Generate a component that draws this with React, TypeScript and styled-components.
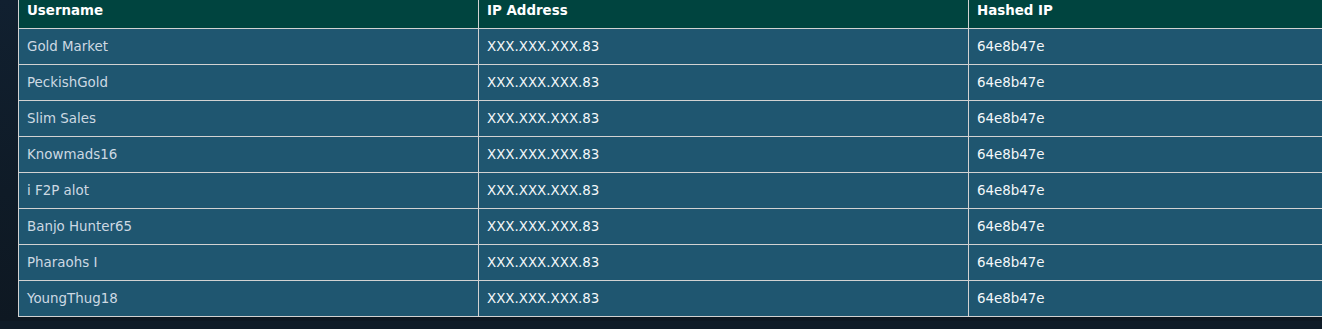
import React from "react";
import styled, { createGlobalStyle } from "styled-components";

const Global = createGlobalStyle`
  html, body {
    margin: 0;
    padding: 0;
    background: #0f1b27;
    overflow: hidden;
  }
  body {
    font-family: "DejaVu Sans", Verdana, sans-serif;
    background-color: #0f1b27;
    background-image:
      radial-gradient(1px 1px at 4px 40px, #5d7a92 50%, transparent 51%),
      radial-gradient(1px 1px at 11px 120px, #4d6a82 50%, transparent 51%),
      radial-gradient(1px 1px at 6px 210px, #52708a 50%, transparent 51%),
      radial-gradient(1px 1px at 13px 290px, #4a6680 50%, transparent 51%),
      linear-gradient(180deg, #112030 0%, #0f1b27 60%, #0e1822 100%);
  }
`;

const Page = styled.div`
  padding: 0 0 0 18px;
  height: 329px;
  box-sizing: border-box;
`;

const Table = styled.table`
  border-collapse: collapse;
  width: 100%;
  margin-top: -8px;
  table-layout: fixed;
  border: 1px solid #d2d2d2;
  border-right: none;
`;

const HeadCell = styled.th<{ $w?: number; $last?: boolean }>`
  width: ${(p) => (p.$w ? `${p.$w}px` : "auto")};
  background: #00443f;
  color: #ffffff;
  font-weight: bold;
  font-size: 13.4px;
  text-align: left;
  height: 36px;
  padding: 0 8px;
  box-sizing: border-box;
  border: 1px solid #d2d2d2;
  border-top: none;
  border-right: ${(p) => (p.$last ? "none" : "1px solid #d2d2d2")};
  vertical-align: middle;
`;

const Cell = styled.td<{ $muted?: boolean; $last?: boolean }>`
  background: #1f5670;
  color: ${(p) => (p.$muted ? "#cdd9e3" : "#f4f8fa")};
  font-size: 13.4px;
  height: 36px;
  padding: 0 8px;
  box-sizing: border-box;
  border: 1px solid #d2d2d2;
  border-right: ${(p) => (p.$last ? "none" : "1px solid #d2d2d2")};
  vertical-align: middle;
  white-space: nowrap;
`;

const rows = [
  "Gold Market",
  "PeckishGold",
  "Slim Sales",
  "Knowmads16",
  "i F2P alot",
  "Banjo Hunter65",
  "Pharaohs I",
  "YoungThug18",
];

export default function App() {
  return (
    <>
      <Global />
      <Page>
        <Table>
          <thead>
            <tr>
              <HeadCell $w={460}>Username</HeadCell>
              <HeadCell $w={490}>IP Address</HeadCell>
              <HeadCell $last>Hashed IP</HeadCell>
            </tr>
          </thead>
          <tbody>
            {rows.map((name) => (
              <tr key={name}>
                <Cell $muted>{name}</Cell>
                <Cell>XXX.XXX.XXX.83</Cell>
                <Cell $last>64e8b47e</Cell>
              </tr>
            ))}
          </tbody>
        </Table>
      </Page>
    </>
  );
}
